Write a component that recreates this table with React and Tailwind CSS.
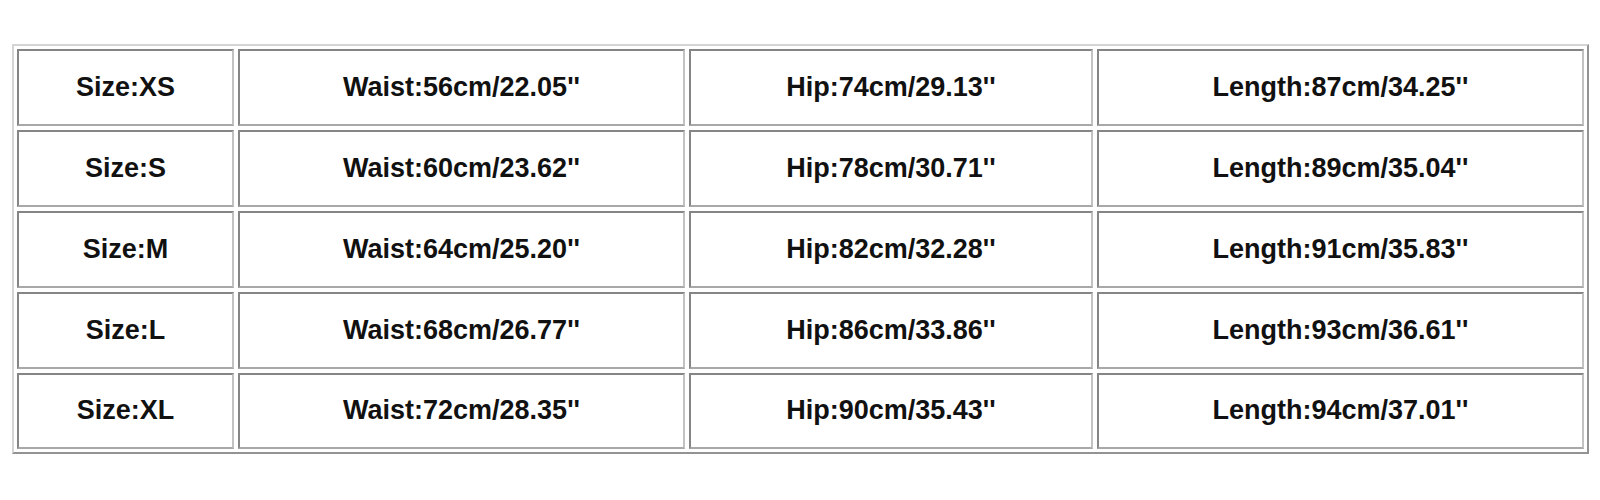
const rows = [
  ["Size:XS", "Waist:56cm/22.05''", "Hip:74cm/29.13''", "Length:87cm/34.25''"],
  ["Size:S", "Waist:60cm/23.62''", "Hip:78cm/30.71''", "Length:89cm/35.04''"],
  ["Size:M", "Waist:64cm/25.20''", "Hip:82cm/32.28''", "Length:91cm/35.83''"],
  ["Size:L", "Waist:68cm/26.77''", "Hip:86cm/33.86''", "Length:93cm/36.61''"],
  ["Size:XL", "Waist:72cm/28.35''", "Hip:90cm/35.43''", "Length:94cm/37.01''"],
];

export default function App() {
  return (
    <div className="w-[1600px] h-[500px] bg-white pl-[12px] pt-[44px]" style={{ fontFamily: '"Liberation Sans", Arial, sans-serif' }}>
      <div className="w-fit border-2 border-t-[#d4d4d4] border-l-[#d4d4d4] border-r-[#939393] border-b-[#939393] p-[3px]">
        <div className="grid grid-cols-[217px_447px_404px_487px] grid-rows-[77px_77px_77px_77px_76px] gap-[4px]">
          {rows.flatMap((row, ri) =>
            row.map((cell, ci) => (
              <div
                key={ri + "-" + ci}
                className="flex items-center justify-center border-2 border-t-[#858585] border-l-[#858585] border-r-[#c2c2c2] border-b-[#a8a8a8] text-[27px] font-bold text-[#111] leading-none pb-[1px]"
              >
                {cell}
              </div>
            ))
          )}
        </div>
      </div>
    </div>
  );
}
